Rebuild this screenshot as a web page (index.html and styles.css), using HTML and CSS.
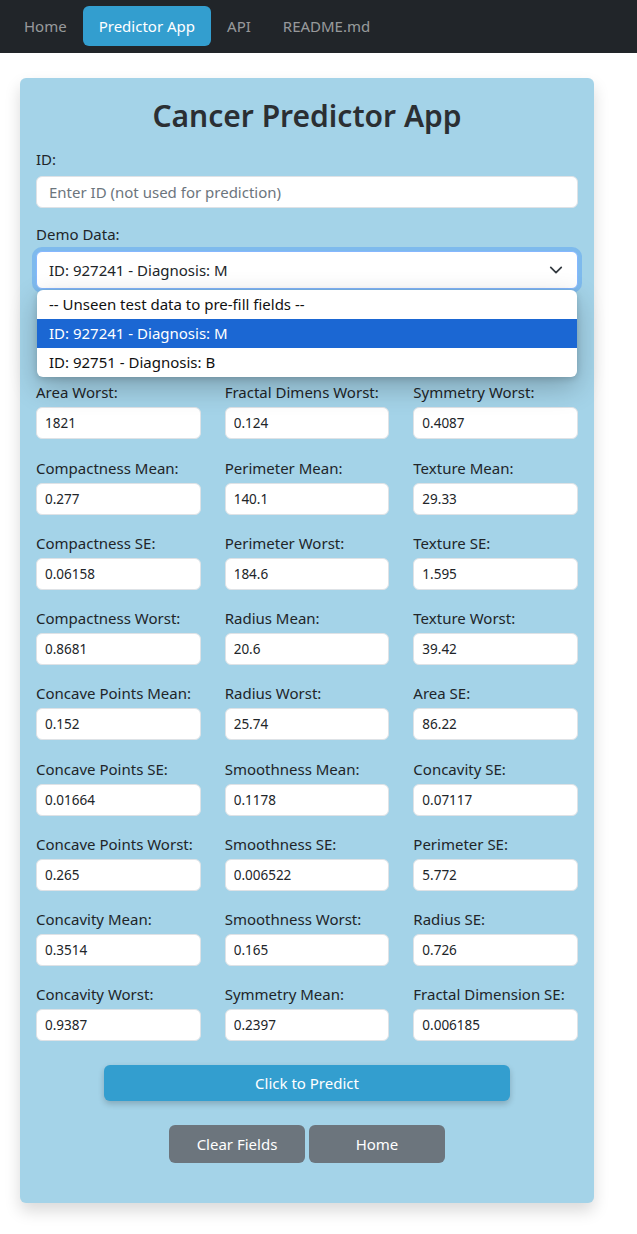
FILE: index.html
```html
<!DOCTYPE html>
<html lang="en">
<head>
<meta charset="utf-8">
<title>Cancer Predictor App</title>
<link rel="stylesheet" href="styles.css">
</head>
<body>
<nav class="navbar">
  <a class="nav-link">Home</a>
  <a class="nav-link active">Predictor App</a>
  <a class="nav-link">API</a>
  <a class="nav-link">README.md</a>
</nav>
<main class="card">
  <h2 class="title">Cancer Predictor App</h2>
  <div class="field">
    <label class="lbl top">ID:</label>
    <input class="form-control" type="text" placeholder="Enter ID (not used for prediction)">
  </div>
  <div class="field demo">
    <label class="lbl top">Demo Data:</label>
    <div class="select">
      <span>ID: 927241 - Diagnosis: M</span>
      <svg class="chev" width="14" height="14" viewBox="0 0 16 16"><path d="M2 5l6 6 6-6" fill="none" stroke="#343a40" stroke-width="2" stroke-linecap="round" stroke-linejoin="round"/></svg>
    </div>
    <ul class="options">
      <li>-- Unseen test data to pre-fill fields --</li>
      <li class="sel">ID: 927241 - Diagnosis: M</li>
      <li>ID: 92751 - Diagnosis: B</li>
    </ul>
  </div>
  <div class="grid">
    <div class="cell covered" aria-hidden="true"><label class="lbl">Area Mean:</label><input class="form-control sm" value="2501"></div>
    <div class="cell covered" aria-hidden="true"><label class="lbl">Fractal Dimens Mean:</label><input class="form-control sm" value="0.07871"></div>
    <div class="cell covered" aria-hidden="true"><label class="lbl">Symmetry SE:</label><input class="form-control sm" value="0.02"></div>

    <div class="cell"><label class="lbl">Area Worst:</label><input class="form-control sm" value="1821"></div>
    <div class="cell"><label class="lbl">Fractal Dimens Worst:</label><input class="form-control sm" value="0.124"></div>
    <div class="cell"><label class="lbl">Symmetry Worst:</label><input class="form-control sm" value="0.4087"></div>

    <div class="cell"><label class="lbl">Compactness Mean:</label><input class="form-control sm" value="0.277"></div>
    <div class="cell"><label class="lbl">Perimeter Mean:</label><input class="form-control sm" value="140.1"></div>
    <div class="cell"><label class="lbl">Texture Mean:</label><input class="form-control sm" value="29.33"></div>

    <div class="cell"><label class="lbl">Compactness SE:</label><input class="form-control sm" value="0.06158"></div>
    <div class="cell"><label class="lbl">Perimeter Worst:</label><input class="form-control sm" value="184.6"></div>
    <div class="cell"><label class="lbl">Texture SE:</label><input class="form-control sm" value="1.595"></div>

    <div class="cell"><label class="lbl">Compactness Worst:</label><input class="form-control sm" value="0.8681"></div>
    <div class="cell"><label class="lbl">Radius Mean:</label><input class="form-control sm" value="20.6"></div>
    <div class="cell"><label class="lbl">Texture Worst:</label><input class="form-control sm" value="39.42"></div>

    <div class="cell"><label class="lbl">Concave Points Mean:</label><input class="form-control sm" value="0.152"></div>
    <div class="cell"><label class="lbl">Radius Worst:</label><input class="form-control sm" value="25.74"></div>
    <div class="cell"><label class="lbl">Area SE:</label><input class="form-control sm" value="86.22"></div>

    <div class="cell"><label class="lbl">Concave Points SE:</label><input class="form-control sm" value="0.01664"></div>
    <div class="cell"><label class="lbl">Smoothness Mean:</label><input class="form-control sm" value="0.1178"></div>
    <div class="cell"><label class="lbl">Concavity SE:</label><input class="form-control sm" value="0.07117"></div>

    <div class="cell"><label class="lbl">Concave Points Worst:</label><input class="form-control sm" value="0.265"></div>
    <div class="cell"><label class="lbl">Smoothness SE:</label><input class="form-control sm" value="0.006522"></div>
    <div class="cell"><label class="lbl">Perimeter SE:</label><input class="form-control sm" value="5.772"></div>

    <div class="cell"><label class="lbl">Concavity Mean:</label><input class="form-control sm" value="0.3514"></div>
    <div class="cell"><label class="lbl">Smoothness Worst:</label><input class="form-control sm" value="0.165"></div>
    <div class="cell"><label class="lbl">Radius SE:</label><input class="form-control sm" value="0.726"></div>

    <div class="cell"><label class="lbl">Concavity Worst:</label><input class="form-control sm" value="0.9387"></div>
    <div class="cell"><label class="lbl">Symmetry Mean:</label><input class="form-control sm" value="0.2397"></div>
    <div class="cell"><label class="lbl">Fractal Dimension SE:</label><input class="form-control sm" value="0.006185"></div>
  </div>
  <div class="predict-row">
    <button class="btn btn-predict">Click to Predict</button>
  </div>
  <div class="btn-row">
    <button class="btn btn-gray">Clear Fields</button>
    <button class="btn btn-gray">Home</button>
  </div>
</main>
</body>
</html>
```
FILE: styles.css
```css
* { box-sizing: border-box; }
body {
  margin: 0;
  font-family: "Noto Sans", "Open Sans", sans-serif;
  font-size: 15px;
  color: #212529;
  background: #fff;
}
.navbar {
  background: #212529;
  height: 53px;
  display: flex;
  align-items: flex-start;
  padding: 6px 8px 0 8px;
}
.nav-link {
  display: block;
  height: 40px;
  line-height: 40px;
  padding: 0 16px;
  border-radius: 6px;
  color: rgba(255,255,255,0.55);
  font-size: 15px;
}
.nav-link.active {
  background: #339ecf;
  color: #fff;
}
.card {
  width: 574px;
  margin: 25px 0 32px 20px;
  background: #a4d3e8;
  border-radius: 6px;
  padding: 14px 16px 40px 16px;
  box-shadow: 0 8px 16px rgba(0,0,0,0.15);
}
.title {
  margin: 0 0 7px 0;
  text-align: center;
  font-size: 30px;
  font-weight: 600;
  line-height: 48px;
  color: #2b2f33;
}
.lbl {
  display: block;
  line-height: 24px;
  margin-bottom: 3px;
}
.lbl.top { margin-bottom: 5px; }
.field { margin-bottom: 14px; }
.form-control {
  display: block;
  width: 100%;
  height: 32px;
  border: 1px solid #dee2e6;
  border-radius: 6px;
  background: #fff;
  padding: 0 12px;
  font-family: inherit;
  font-size: 15px;
  color: #212529;
  outline: none;
}
.form-control::placeholder { color: #6c757d; }
.form-control.sm {
  padding: 0 8px;
  font-size: 13.5px;
}
.covered { visibility: hidden; }
.demo {
  position: relative;
  margin-bottom: 0;
}
.select {
  height: 38px;
  border: 1px solid #86b7fe;
  border-radius: 6px;
  background: #fff;
  box-shadow: 0 0 0 4px rgba(13,110,253,0.25);
  display: flex;
  align-items: center;
  justify-content: space-between;
  padding: 0 14px 0 12px;
}
.chev { display: block; }
.options {
  position: absolute;
  left: 1px;
  right: 1px;
  top: 68px;
  margin: 0;
  padding: 0;
  list-style: none;
  background: #fff;
  border-radius: 6px;
  overflow: hidden;
  box-shadow: 0 10px 28px rgba(0,0,0,0.24), 0 2px 6px rgba(0,0,0,0.15);
  z-index: 5;
}
.options li {
  height: 29px;
  line-height: 29px;
  padding: 0 12px;
  color: #111;
}
.options li.sel {
  background: #1b67d3;
  color: #fff;
}
.grid {
  display: grid;
  grid-template-columns: repeat(3, 1fr);
  column-gap: 24px;
  row-gap: 16.25px;
  margin-top: 16px;
}
.predict-row {
  display: flex;
  justify-content: center;
  margin-top: 24px;
}
.btn {
  font-family: inherit;
  font-size: 15px;
  color: #fff;
  border: none;
  border-radius: 6px;
  cursor: pointer;
}
.btn-predict {
  width: 406px;
  height: 36px;
  background: #339ecf;
  box-shadow: 0 3px 6px rgba(0,0,0,0.2);
}
.btn-row {
  display: flex;
  justify-content: center;
  gap: 4px;
  margin-top: 24px;
}
.btn-gray {
  width: 136px;
  height: 38px;
  background: #6c757d;
}
```
